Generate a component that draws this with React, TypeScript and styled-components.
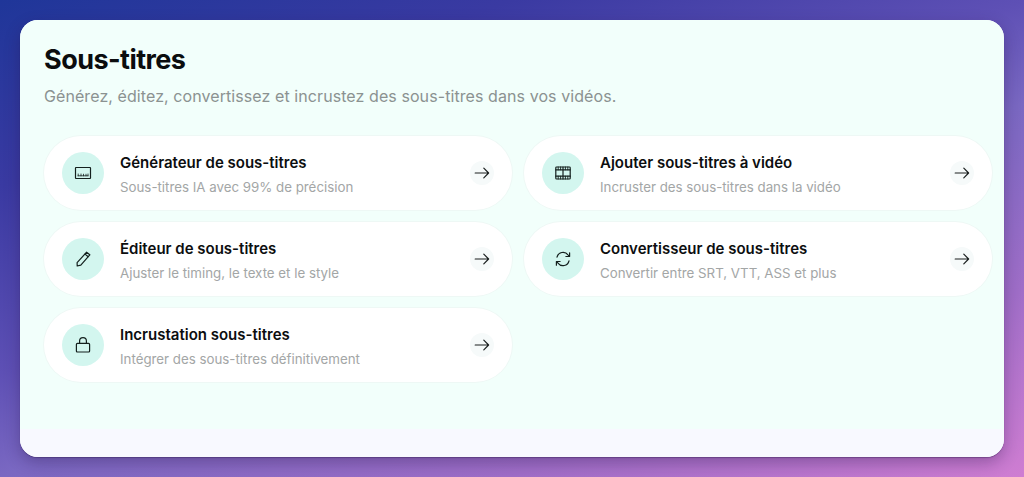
import React from "react";
import styled, { createGlobalStyle } from "styled-components";

const Global = createGlobalStyle`
  html, body { margin: 0; padding: 0; height: 100%; }
  body { font-family: Inter, "Noto Sans", sans-serif; overflow: hidden; -webkit-font-smoothing: antialiased; }
  * { box-sizing: border-box; }
`;

const Page = styled.div`
  width: 1024px;
  height: 477px;
  padding: 20px;
  background: linear-gradient(160deg, #1f3699 0%, #3a3aa2 22%, #5e50b5 44%, #7a68c2 56%, #a06ec8 78%, #cf7dd2 100%);
`;

const Panel = styled.main`
  height: 437px;
  border-radius: 18px;
  overflow: hidden;
  display: flex;
  flex-direction: column;
  background: #f8f9ff;
  box-shadow: 0 1px 1px rgba(40, 20, 70, 0.35), 0 6px 16px rgba(40, 20, 70, 0.32);
`;

const Content = styled.div`
  height: 409px;
  padding: 24px 12px 0 24px;
  background: #f2fffb;
`;

const Title = styled.h1`
  margin: 0;
  font-size: 27px;
  line-height: 32px;
  font-weight: 700;
  letter-spacing: -0.55px;
  color: #0b0d0e;
`;

const Subtitle = styled.p`
  margin: 9px 0 0;
  font-size: 16px;
  line-height: 22px;
  letter-spacing: 0.08px;
  color: #8b9291;
`;

const Grid = styled.div`
  margin-top: 29px;
  display: grid;
  grid-template-columns: 468px 468px;
  grid-auto-rows: 74px;
  gap: 12px;
`;

const Card = styled.div`
  display: flex;
  align-items: center;
  height: 74px;
  padding: 0 18px;
  border-radius: 37px;
  background: #fff;
  box-shadow: 0 0 0 1px #eef8f5;
`;

const IconCircle = styled.div`
  flex: none;
  width: 42px;
  height: 42px;
  border-radius: 50%;
  background: #d3f6ef;
  color: #14201e;
  display: flex;
  align-items: center;
  justify-content: center;
`;

const Texts = styled.div`
  flex: 1;
  margin: 2px 0 0 16px;
  min-width: 0;
`;

const CardTitle = styled.div`
  font-size: 15px;
  line-height: 20px;
  font-weight: 600;
  color: #0c0e0f;
`;

const CardSub = styled.div`
  margin-top: 5px;
  font-size: 13.3px;
  line-height: 18px;
  color: #a3a6a6;
`;

const ArrowCircle = styled.div`
  flex: none;
  width: 24px;
  height: 24px;
  border-radius: 50%;
  background: #f6fafa;
  color: #1a1f1f;
  display: flex;
  align-items: center;
  justify-content: center;
`;

const Footer = styled.div`
  height: 28px;
  background: #f8f9ff;
`;

const Svg = styled.svg`
  display: block;
  fill: none;
  stroke: currentColor;
  stroke-linecap: round;
  stroke-linejoin: round;
`;

const CaptionIcon = () => (
  <Svg width="18" height="18" viewBox="0 0 18 18" strokeWidth="1.2">
    <rect x="1.5" y="3.5" width="15" height="11" rx="0.5" />
    <path d="M4 11.8h10M4.2 10v1.8M7 10v1.8M9.5 10.2v1.6M12 10.2v1.6M14 10v1.8" strokeWidth="0.8" />
  </Svg>
);
const FilmIcon = () => (
  <Svg width="18" height="18" viewBox="0 0 18 18" strokeWidth="1.2">
    <rect x="1.8" y="3" width="14.4" height="12" rx="0.8" />
    <path d="M1.8 5.8h14.4M1.8 12.2h14.4M9 3v12" />
    <path d="M4.2 3v2.8M6.6 3v2.8M11.4 3v2.8M13.8 3v2.8M4.2 12.2V15M6.6 12.2V15M11.4 12.2V15M13.8 12.2V15" strokeWidth="0.9" />
  </Svg>
);
const PencilIcon = () => (
  <Svg width="18" height="18" viewBox="0 0 18 18" strokeWidth="1.2">
    <path d="M12.6 2.2l3.2 2.6-9 10.4-3.6.8-.1-3.4z" />
    <path d="M11 4.1l3.2 2.6" />
  </Svg>
);
const RefreshIcon = () => (
  <Svg width="18" height="18" viewBox="0 0 18 18" strokeWidth="1.2">
    <path d="M3 7.2A6.2 6.2 0 0 1 14 4.8l1.4 1.6" />
    <path d="M15.6 2.8v3.7h-3.7" />
    <path d="M15 10.8A6.2 6.2 0 0 1 4 13.2l-1.4-1.6" />
    <path d="M2.4 15.2v-3.7h3.7" />
  </Svg>
);
const LockIcon = () => (
  <Svg width="18" height="18" viewBox="0 0 18 18" strokeWidth="1.2">
    <rect x="2.4" y="7.4" width="13.2" height="8.6" rx="1" />
    <path d="M5.6 7.4V5a3.4 3.4 0 0 1 6.8 0v2.4" />
  </Svg>
);
const ArrowIcon = () => (
  <Svg width="16" height="16" viewBox="0 0 16 16" strokeWidth="1.2">
    <path d="M1.2 8h13.4M9.8 3.2L14.6 8l-4.8 4.8" />
  </Svg>
);

const items = [
  { icon: <CaptionIcon />, title: "Générateur de sous-titres", sub: "Sous-titres IA avec 99% de précision" },
  { icon: <FilmIcon />, title: "Ajouter sous-titres à vidéo", sub: "Incruster des sous-titres dans la vidéo" },
  { icon: <PencilIcon />, title: "Éditeur de sous-titres", sub: "Ajuster le timing, le texte et le style" },
  { icon: <RefreshIcon />, title: "Convertisseur de sous-titres", sub: "Convertir entre SRT, VTT, ASS et plus" },
  { icon: <LockIcon />, title: "Incrustation sous-titres", sub: "Intégrer des sous-titres définitivement" },
];

export default function App() {
  return (
    <Page>
      <Global />
      <Panel>
        <Content>
          <Title>Sous-titres</Title>
          <Subtitle>Générez, éditez, convertissez et incrustez des sous-titres dans vos vidéos.</Subtitle>
          <Grid>
            {items.map((item) => (
              <Card key={item.title}>
                <IconCircle>{item.icon}</IconCircle>
                <Texts>
                  <CardTitle>{item.title}</CardTitle>
                  <CardSub>{item.sub}</CardSub>
                </Texts>
                <ArrowCircle><ArrowIcon /></ArrowCircle>
              </Card>
            ))}
          </Grid>
        </Content>
        <Footer />
      </Panel>
    </Page>
  );
}
